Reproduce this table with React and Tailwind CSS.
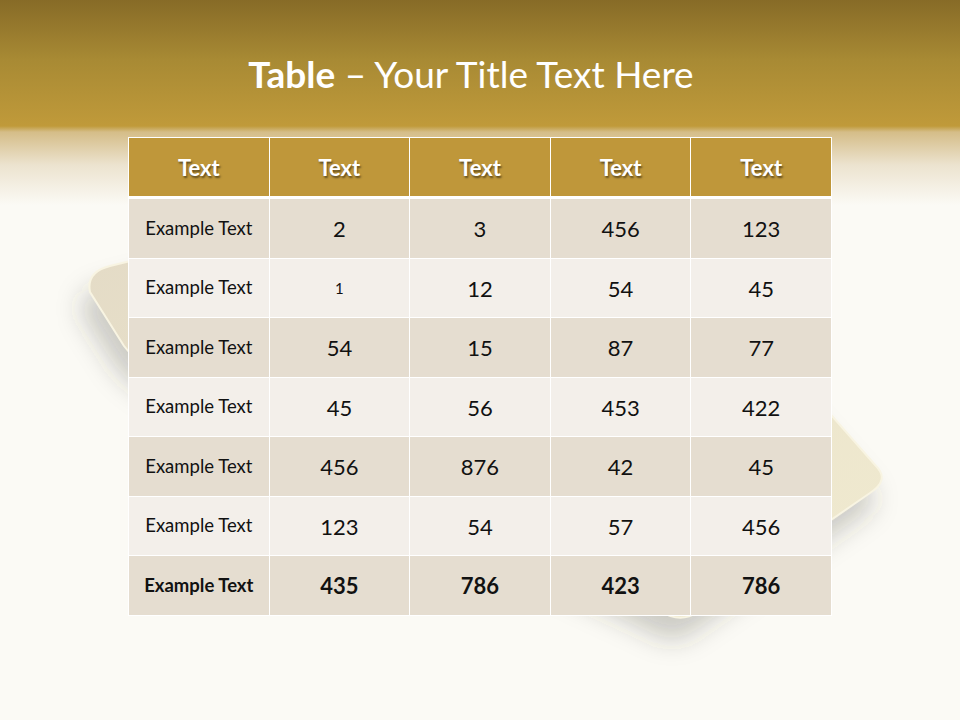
import React from 'react';

const header = ['Text', 'Text', 'Text', 'Text', 'Text'];

const rows = [
    ['Example Text', '2', '3', '456', '123'],
    ['Example Text', '1', '12', '54', '45'],
    ['Example Text', '54', '15', '87', '77'],
    ['Example Text', '45', '56', '453', '422'],
    ['Example Text', '456', '876', '42', '45'],
    ['Example Text', '123', '54', '57', '456'],
    ['Example Text', '435', '786', '423', '786'],
];

const shapePath =
    'M 590 148 L 110 266 Q 86 272 90 292 L 124 346 Q 140 368 200 396 L 660 611 Q 680 624 698 612 L 870 493 Q 890 480 876 466 L 600 152 Q 596 146 590 148 Z';

const Backdrop = () => (
    <svg className="absolute left-0 top-0" width="960" height="720" viewBox="0 0 960 720">
        <defs>
            <filter id="blur" x="-20%" y="-20%" width="140%" height="140%">
                <feGaussianBlur stdDeviation="13" />
            </filter>
            <linearGradient id="fill" x1="0" y1="0" x2="1" y2="1">
                <stop offset="0" stopColor="#e2d9c5" />
                <stop offset="0.6" stopColor="#ece5cc" />
                <stop offset="1" stopColor="#f0ead0" />
            </linearGradient>
        </defs>
        <path d={shapePath} fill="rgba(60,55,45,0.25)" filter="url(#blur)" transform="translate(-8 22)" />
        <path d={shapePath} fill="url(#fill)" stroke="#f8f4e2" strokeWidth="2" />
    </svg>
);

const Row = ({ cells, shade, last }) => (
    <div className="grid grid-cols-5 gap-px h-[58.5px]">
        {cells.map((c, i) => (
            <div
                key={i}
                className={`flex items-center justify-center pt-px text-[#111] ${shade ? 'bg-[#e5ddd0]' : 'bg-[#f3efea]'} ${last ? 'font-bold' : ''} ${i === 0 ? 'text-[18.5px]' : c === '1' ? 'text-[15px]' : 'text-[22px]'}`}
            >
                {c}
            </div>
        ))}
    </div>
);

export default function App() {
    return (
        <div
            className="relative w-[960px] h-[720px] overflow-hidden bg-[#fbfaf5] bg-[linear-gradient(to_bottom,#876b27_0px,#a88a34_60px,#c09a3a_126px,#d5bd88_132px,#ece3cf_165px,#fbfaf5_205px)]"
            style={{ fontFamily: 'Lato, "Open Sans", sans-serif' }}
        >
            <Backdrop />

            <div className="relative flex flex-col">
                <div className="h-[137px] flex items-center justify-center pt-[10px] pr-[18px] text-white text-[37px]">
                    <span className="font-bold">Table</span>
                    <span>&nbsp;– Your Title Text Here</span>
                </div>

                <div className="ml-[128px] w-[704px] bg-white p-px flex flex-col">
                    <div className="grid grid-cols-5 gap-px h-[58px]">
                        {header.map((h, i) => (
                            <div
                                key={i}
                                className="flex items-center justify-center bg-[#bf973a] text-white font-bold text-[22px] [text-shadow:1px_2px_2px_rgba(0,0,0,0.5)]"
                            >
                                {h}
                            </div>
                        ))}
                    </div>
                    <div className="mt-[3px] flex flex-col gap-px">
                        {rows.map((r, i) => (
                            <Row key={i} cells={r} shade={i % 2 === 0} last={i === rows.length - 1} />
                        ))}
                    </div>
                </div>
            </div>
        </div>
    );
}
